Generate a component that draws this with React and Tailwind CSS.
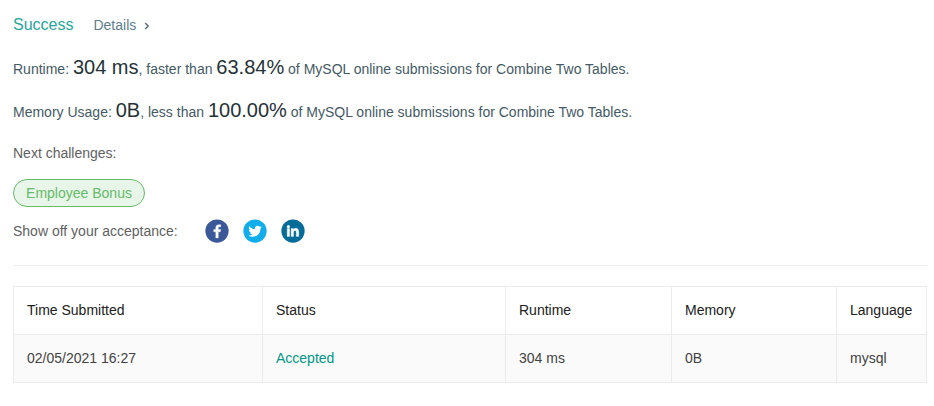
import React from "react";

const columns = ["Time Submitted", "Status", "Runtime", "Memory", "Language"];
const submission = ["02/05/2021 16:27", "Accepted", "304 ms", "0B", "mysql"];

function Facebook() {
  return (
    <svg className="size-6" viewBox="0 0 64 64" aria-label="Facebook">
      <circle cx="32" cy="32" r="31" fill="#3b5998" />
      <path
        fill="#fff"
        stroke="#fff"
        strokeWidth="0.8"
        transform="translate(-5.500 -5) scale(1.200 1.180)"
        d="M34.1 47V33.3h4.6l.7-5.3h-5.3v-3.4c0-1.500.4-2.600 2.600-2.600h2.800v-4.800c-.5-.1-2.200-.2-4.100-.2-4.100 0-6.900 2.500-6.900 7.100V28H24v5.300h4.600V47h5.500z"
      />
    </svg>
  );
}

function Twitter() {
  return (
    <svg className="size-6" viewBox="0 0 64 64" aria-label="Twitter">
      <circle cx="32" cy="32" r="31" fill="#12aeec" />
      <path
        fill="#fff"
        transform="translate(-3.800 -3.100) scale(1.120)"
        d="M48 22.1c-1.200.5-2.400.9-3.800 1 1.400-.8 2.400-2.100 2.900-3.600-1.300.8-2.700 1.300-4.200 1.600C41.700 19.800 40 19 38.200 19c-3.600 0-6.600 2.900-6.600 6.600 0 .5.100 1 .2 1.500-5.500-.3-10.300-2.900-13.500-6.900-.6 1-.9 2.100-.9 3.300 0 2.300 1.200 4.300 2.900 5.500-1.100 0-2.100-.3-3-.8v.1c0 3.200 2.300 5.800 5.300 6.400-.6.1-1.100.2-1.700.2-.4 0-.8 0-1.200-.1.8 2.600 3.300 4.500 6.100 4.600-2.200 1.800-5.100 2.800-8.200 2.800-.5 0-1.100 0-1.600-.1 2.900 1.900 6.400 2.900 10.100 2.900 12.100 0 18.700-10 18.700-18.700v-.8c1.200-1 2.300-2.100 3.200-3.400z"
      />
    </svg>
  );
}

function Linkedin() {
  return (
    <svg className="size-6" viewBox="0 0 64 64" aria-label="LinkedIn">
      <circle cx="32" cy="32" r="31" fill="#046c98" />
      <path
        fill="#fff"
        stroke="#fff"
        strokeWidth="0.7"
        transform="translate(-8 -7.200) scale(1.200 1.220)"
        d="M20.400 44h5.400V26.600h-5.400V44zm2.700-18.100c-1.700 0-3.100-1.400-3.100-3.100s1.400-3.100 3.100-3.100 3.100 1.400 3.100 3.100-1.400 3.100-3.100 3.100zM46 44h-5.400v-8.400c0-2 0-4.600-2.800-4.600s-3.200 2.200-3.200 4.500V44h-5.400V26.600h5.200V29h.1c.7-1.400 2.500-2.800 5.100-2.800 5.500 0 6.500 3.600 6.500 8.300V44z"
      />
    </svg>
  );
}

function Stat({ label, value, comparison, percent }) {
  return (
    <p className="h-[43px] whitespace-nowrap leading-[30px] text-[#455a64]">
      {label}: <span className="text-xl leading-none text-[#263238]">{value}</span>, {comparison} than{" "}
      <span className="text-xl leading-none text-[#263238]">{percent}</span> of MySQL online submissions for Combine Two
      Tables.
    </p>
  );
}

export default function App() {
  return (
    <main className="h-[406px] w-[934px] overflow-hidden bg-white pl-[13px] pr-[7px] pt-[13px] font-['Liberation_Sans',Arial,sans-serif] text-sm text-[#616161]">
      <div className="flex h-6 items-center">
        <span className="text-base text-[#26a69a]">Success</span>
        <a className="ml-5 flex items-center text-[#607d8b]">
          Details
          <svg className="ml-2 mt-[2px] h-2 w-[6px]" viewBox="0 0 6 8" fill="none" stroke="#546e7a" strokeWidth="1.4">
            <path d="M1.200 1l3 3-3 3" />
          </svg>
        </a>
      </div>
      <section className="pt-[17px]">
        <Stat label="Runtime" value="304 ms" comparison="faster" percent="63.84%" />
        <Stat label="Memory Usage" value="0B" comparison="less" percent="100.00%" />
      </section>
      <p className="mt-[3px] h-5 leading-5">Next challenges:</p>
      <a className="mt-4 flex h-7 w-[132px] items-center justify-center rounded-full border border-[#66bb6a] bg-[#e8f5e9] text-[#66bb6a]">
        Employee Bonus
      </a>
      <div className="mt-3 flex h-6 items-center">
        <span className="w-[192px]">Show off your acceptance:</span>
        <div className="flex gap-[14px]">
          <Facebook />
          <Twitter />
          <Linkedin />
        </div>
      </div>
      <hr className="mt-[22px] border-[#eeeeee]" />
      <table className="mt-5 w-[914px] table-fixed border-separate border-spacing-0 border-l border-t border-[#ececec] text-left">
        <colgroup>
          <col className="w-[249px]" />
          <col className="w-[243px]" />
          <col className="w-[166px]" />
          <col className="w-[165px]" />
          <col className="w-[90px]" />
        </colgroup>
        <thead>
          <tr>
            {columns.map((name) => (
              <th key={name} className="h-12 border-b border-r border-[#ececec] pb-[2px] pl-[13px] pr-0 pt-0 font-normal text-[#212121]">
                {name}
              </th>
            ))}
          </tr>
        </thead>
        <tbody>
          <tr className="bg-[#fafafa] text-[#424242]">
            {submission.map((value) => (
              <td key={value} className="h-12 border-b border-r border-[#ececec] pb-[2px] pl-[13px] pr-0 pt-0">
                {value === "Accepted" ? <a className="text-[#009688]">{value}</a> : value}
              </td>
            ))}
          </tr>
        </tbody>
      </table>
    </main>
  );
}
